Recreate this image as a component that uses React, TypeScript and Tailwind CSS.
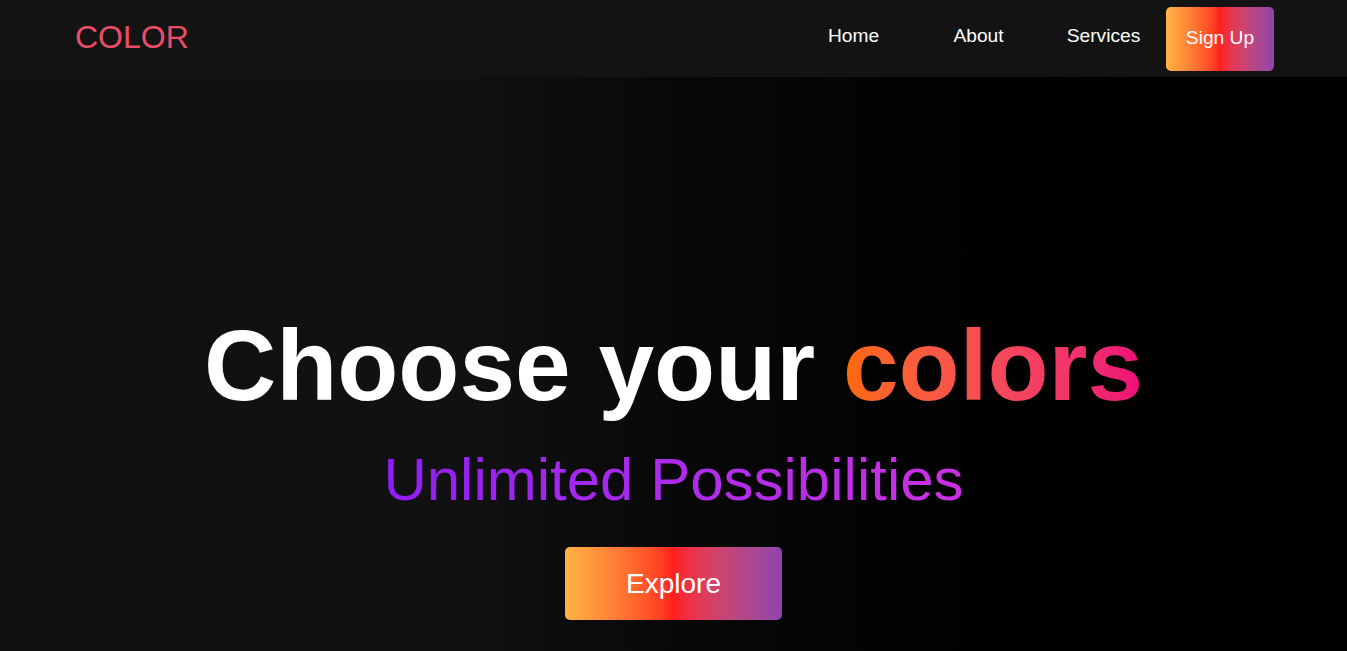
export default function App() {
  const links = ["Home", "About", "Services"];

  return (
    <div className="min-h-screen bg-black font-['Liberation_Sans',Arial,sans-serif]">
      <header className="flex h-[77px] items-center justify-between bg-[#131313] pl-[75px] pr-[73px]">
        <div className="-mt-[3px] text-[32px] leading-none text-[#ea4d67]">COLOR</div>
        <nav className="flex items-center">
          {links.map((link) => (
            <a
              key={link}
              href="#"
              className="-mt-[4px] w-[125px] text-center text-[19.2px] text-white"
            >
              {link}
            </a>
          ))}
          <button className="h-16 w-[108px] rounded-[5px] bg-linear-to-r from-[#ffb347] via-[#ff1e1e] to-[#8e44ad] text-[19.2px] text-white">
            Sign Up
          </button>
        </nav>
      </header>

      <section className="flex h-[574px] flex-col items-center bg-linear-to-r from-[#111111] from-35% to-black pt-[231px]">
        <h1 className="text-[100px] font-bold leading-[115px] text-white">
          Choose your{" "}
          <span className="bg-linear-to-r from-[#ff6a00] to-[#ee0979] bg-clip-text text-transparent">
            colors
          </span>
        </h1>
        <p className="mt-[22px] bg-linear-to-r from-[#901cf5] to-[#cc2fe2] bg-clip-text text-[60px] leading-[69px] text-transparent">
          Unlimited Possibilities
        </p>
        <button className="mt-[33px] h-[73px] w-[217px] rounded-[5px] bg-linear-to-r from-[#ffb347] via-[#ff1e1e] to-[#8e44ad] text-[28px] text-white">
          Explore
        </button>
      </section>
    </div>
  );
}
